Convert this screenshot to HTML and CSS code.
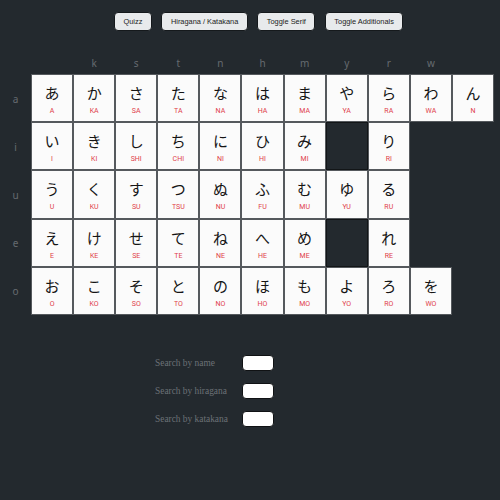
FILE: index.html
```html
<!DOCTYPE html>
<html lang="ja">
<head>
<meta charset="utf-8">
<title>Kana</title>
<link rel="stylesheet" href="styles.css">
</head>
<body>
<div class="toolbar">
  <button class="btn">Quizz</button>
  <button class="btn">Hiragana / Katakana</button>
  <button class="btn">Toggle Serif</button>
  <button class="btn">Toggle Additionals</button>
</div>

<div class="chart">
  <div class="head"></div><div class="head"></div><div class="head">k</div><div class="head">s</div><div class="head">t</div><div class="head">n</div><div class="head">h</div><div class="head">m</div><div class="head">y</div><div class="head">r</div><div class="head">w</div><div class="head"></div>

  <div class="label">a</div>
  <div class="cell"><span class="kana">あ</span><span class="roma">A</span></div>
  <div class="cell"><span class="kana">か</span><span class="roma">KA</span></div>
  <div class="cell"><span class="kana">さ</span><span class="roma">SA</span></div>
  <div class="cell"><span class="kana">た</span><span class="roma">TA</span></div>
  <div class="cell"><span class="kana">な</span><span class="roma">NA</span></div>
  <div class="cell"><span class="kana">は</span><span class="roma">HA</span></div>
  <div class="cell"><span class="kana">ま</span><span class="roma">MA</span></div>
  <div class="cell"><span class="kana">や</span><span class="roma">YA</span></div>
  <div class="cell"><span class="kana">ら</span><span class="roma">RA</span></div>
  <div class="cell"><span class="kana">わ</span><span class="roma">WA</span></div>
  <div class="cell"><span class="kana">ん</span><span class="roma">N</span></div>

  <div class="label">i</div>
  <div class="cell"><span class="kana">い</span><span class="roma">I</span></div>
  <div class="cell"><span class="kana">き</span><span class="roma">KI</span></div>
  <div class="cell"><span class="kana">し</span><span class="roma">SHI</span></div>
  <div class="cell"><span class="kana">ち</span><span class="roma">CHI</span></div>
  <div class="cell"><span class="kana">に</span><span class="roma">NI</span></div>
  <div class="cell"><span class="kana">ひ</span><span class="roma">HI</span></div>
  <div class="cell"><span class="kana">み</span><span class="roma">MI</span></div>
  <div class="cell empty"></div>
  <div class="cell"><span class="kana">り</span><span class="roma">RI</span></div>
  <div class="none"></div>
  <div class="none"></div>

  <div class="label">u</div>
  <div class="cell"><span class="kana">う</span><span class="roma">U</span></div>
  <div class="cell"><span class="kana">く</span><span class="roma">KU</span></div>
  <div class="cell"><span class="kana">す</span><span class="roma">SU</span></div>
  <div class="cell"><span class="kana">つ</span><span class="roma">TSU</span></div>
  <div class="cell"><span class="kana">ぬ</span><span class="roma">NU</span></div>
  <div class="cell"><span class="kana">ふ</span><span class="roma">FU</span></div>
  <div class="cell"><span class="kana">む</span><span class="roma">MU</span></div>
  <div class="cell"><span class="kana">ゆ</span><span class="roma">YU</span></div>
  <div class="cell"><span class="kana">る</span><span class="roma">RU</span></div>
  <div class="none"></div>
  <div class="none"></div>

  <div class="label">e</div>
  <div class="cell"><span class="kana">え</span><span class="roma">E</span></div>
  <div class="cell"><span class="kana">け</span><span class="roma">KE</span></div>
  <div class="cell"><span class="kana">せ</span><span class="roma">SE</span></div>
  <div class="cell"><span class="kana">て</span><span class="roma">TE</span></div>
  <div class="cell"><span class="kana">ね</span><span class="roma">NE</span></div>
  <div class="cell"><span class="kana">へ</span><span class="roma">HE</span></div>
  <div class="cell"><span class="kana">め</span><span class="roma">ME</span></div>
  <div class="cell empty"></div>
  <div class="cell"><span class="kana">れ</span><span class="roma">RE</span></div>
  <div class="none"></div>
  <div class="none"></div>

  <div class="label">o</div>
  <div class="cell"><span class="kana">お</span><span class="roma">O</span></div>
  <div class="cell"><span class="kana">こ</span><span class="roma">KO</span></div>
  <div class="cell"><span class="kana">そ</span><span class="roma">SO</span></div>
  <div class="cell"><span class="kana">と</span><span class="roma">TO</span></div>
  <div class="cell"><span class="kana">の</span><span class="roma">NO</span></div>
  <div class="cell"><span class="kana">ほ</span><span class="roma">HO</span></div>
  <div class="cell"><span class="kana">も</span><span class="roma">MO</span></div>
  <div class="cell"><span class="kana">よ</span><span class="roma">YO</span></div>
  <div class="cell"><span class="kana">ろ</span><span class="roma">RO</span></div>
  <div class="cell"><span class="kana">を</span><span class="roma">WO</span></div>
  <div class="none"></div>
</div>

<form class="search">
  <label class="field"><span class="field-label">Search by name</span><input class="field-input" type="text"></label>
  <label class="field"><span class="field-label">Search by hiragana</span><input class="field-input" type="text"></label>
  <label class="field"><span class="field-label">Search by katakana</span><input class="field-input" type="text"></label>
</form>
</body>
</html>
```

FILE: styles.css
```css
html, body {
  margin: 0;
  padding: 0;
  background: #23292e;
}

body {
  width: 500px;
  height: 500px;
  overflow: hidden;
}

.toolbar {
  display: flex;
  gap: 9.5px;
  padding: 12px 0 0 114px;
}

.btn {
  height: 19px;
  padding: 0 8.5px;
  margin: 0;
  font-family: "Liberation Sans", Arial, sans-serif;
  font-size: 7.4px;
  color: #222222;
  background: #e8eaec;
  border: 1px solid #15191c;
  border-radius: 4px;
}

.chart {
  display: grid;
  grid-template-columns: 31px repeat(11, 42.1px);
  grid-template-rows: 22px repeat(5, 48.2px);
  margin-top: 21px;
}

.head, .label {
  display: flex;
  align-items: center;
  justify-content: center;
  font-family: "Noto Sans", sans-serif;
  font-size: 10px;
  color: #666b70;
}

.label {
  padding-top: 1px;
}

.cell {
  box-sizing: border-box;
  border: 1px solid #55595d;
  background: #fbfbfb;
  display: flex;
  flex-direction: column;
  align-items: center;
  padding-top: 8px;
}

.cell.empty {
  background: #23292e;
  border-color: #121517;
}

.kana {
  font-family: "Noto Sans CJK JP", "Noto Sans", sans-serif;
  font-size: 15px;
  line-height: 20px;
  color: #151515;
}

.roma {
  font-family: Roboto, "Noto Sans", sans-serif;
  font-size: 7px;
  line-height: 12px;
  margin-top: 2px;
  color: #e0404a;
}

.search {
  display: flex;
  flex-direction: column;
  gap: 12px;
  padding: 40px 0 0 155px;
  margin: 0;
}

.field {
  display: flex;
  align-items: center;
}

.field-label {
  width: 87px;
  font-family: "Liberation Serif", "Times New Roman", serif;
  font-size: 9.4px;
  color: #6c7176;
}

.field-input {
  box-sizing: border-box;
  width: 32px;
  height: 16px;
  margin: 0;
  padding: 0;
  background: #ffffff;
  border: 1px solid #101214;
  border-radius: 4px;
}
```
